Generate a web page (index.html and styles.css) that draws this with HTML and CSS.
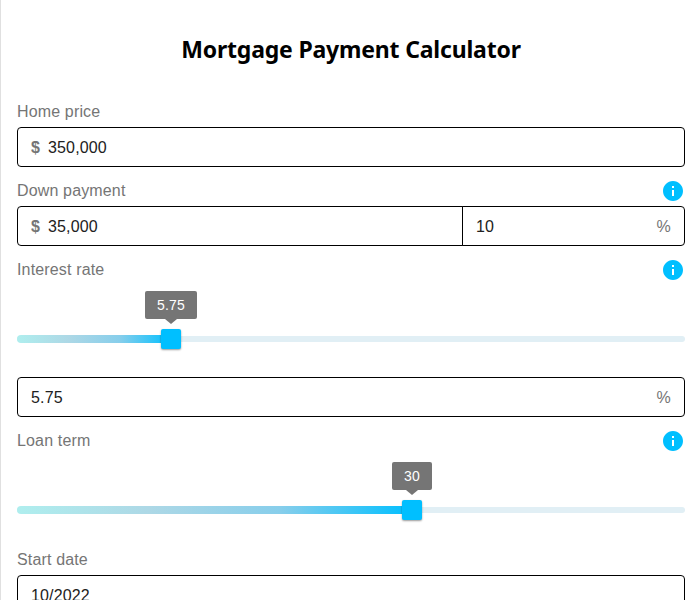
FILE: index.html
```html
<!DOCTYPE html>
<html lang="en">
<head>
<meta charset="utf-8">
<title>Mortgage Payment Calculator</title>
<link rel="stylesheet" href="styles.css">
</head>
<body>
<svg class="sprite" aria-hidden="true"><symbol id="info" viewBox="0 0 24 24"><path d="M12 2C6.48 2 2 6.48 2 12s4.48 10 10 10 10-4.48 10-10S17.520 2 12 2zm1 15h-2v-6h2v6zm0-8h-2V7h2v2z"/></symbol></svg>
<main class="calculator">
  <h1 class="title">Mortgage Payment Calculator</h1>
  <div class="label"><span>Home price</span></div>
  <div class="box"><span class="currency">$</span><span class="value">350,000</span></div>
  <div class="label"><span>Down payment</span><svg class="info"><use href="#info"/></svg></div>
  <div class="split">
    <div class="box box-amount"><span class="currency">$</span><span class="value">35,000</span></div>
    <div class="box box-percent"><span class="value">10</span><span class="percent">%</span></div>
  </div>
  <div class="label"><span>Interest rate</span><svg class="info"><use href="#info"/></svg></div>
  <div class="slider slider-rate">
    <div class="rail"><div class="track" style="width: 154px"></div><div class="thumb" style="left: 154px"><span class="tip tip-rate">5.75</span></div></div>
  </div>
  <div class="box"><span class="value">5.75</span><span class="percent">%</span></div>
  <div class="label"><span>Loan term</span><svg class="info"><use href="#info"/></svg></div>
  <div class="slider slider-term">
    <div class="rail"><div class="track" style="width: 395px"></div><div class="thumb" style="left: 395px"><span class="tip tip-term">30</span></div></div>
  </div>
  <div class="label"><span>Start date</span></div>
  <div class="box"><span class="value">10/2022</span></div>
</main>
</body>
</html>
```
FILE: styles.css
```css
* { box-sizing: border-box; }
html { overflow: hidden; }
body {
  margin: 0;
  height: 600px;
  overflow: hidden;
  background: #fff;
  font-family: "Liberation Sans", Arial, sans-serif;
  font-size: 16px;
  letter-spacing: 0.15px;
}
.sprite { display: none; }
.calculator {
  min-height: 600px;
  padding: 31px 15px 0 16px;
  border-left: 1px solid #e0e0e0;
}
.title {
  margin: 0 0 28px;
  height: 36px;
  font: bold 23px/36px "Noto Sans", "Open Sans", sans-serif;
  letter-spacing: -0.19px;
  text-align: center;
  color: #000;
}
.label {
  display: flex;
  align-items: center;
  justify-content: space-between;
  height: 32px;
  margin-top: 7px;
  padding-top: 2px;
  color: #757575;
}
.title + .label { margin-top: 0; }
.info {
  width: 24px;
  height: 24px;
  fill: #00bfff;
}
.box {
  display: flex;
  align-items: center;
  height: 40px;
  padding: 2px 13px 0;
  border: 1px solid #000;
  border-radius: 4px;
  color: #212121;
}
.currency {
  width: 17px;
  font-weight: bold;
  color: #757575;
}
.value { flex: 1; }
.percent { color: #757575; }
.split { display: flex; }
.box-amount {
  width: 446px;
  border-radius: 4px 0 0 4px;
}
.box-percent {
  flex: 1;
  margin-left: -1px;
  border-radius: 0 4px 4px 0;
}
.slider { padding-top: 51px; }
.slider-rate { height: 92px; }
.slider-term { height: 80px; }
.rail {
  position: relative;
  display: flex;
  align-items: center;
  height: 6px;
  border-radius: 3px;
  background: #e1eff5;
}
.track {
  height: 8px;
  border-radius: 4px;
  background: linear-gradient(90deg, #afeeee, #add8e6, #87ceeb, #00bfff);
}
.thumb {
  position: absolute;
  top: -7px;
  width: 20px;
  height: 20px;
  margin-left: -10px;
  border-radius: 2px;
  background: #00bfff;
  box-shadow: 0 1px 2px rgba(0, 0, 0, 0.4);
}
.tip {
  position: absolute;
  bottom: 30px;
  left: 50%;
  height: 28px;
  border-radius: 2px;
  background: #757575;
  color: #fff;
  font-size: 14px;
  line-height: 28px;
  text-align: center;
  transform: translateX(-50%);
}
.tip-rate { width: 52px; }
.tip-term { width: 40px; }
.tip::after {
  content: "";
  position: absolute;
  top: 100%;
  left: 50%;
  margin-left: -6px;
  border: 6px solid transparent;
  border-top: 5px solid #757575;
  border-bottom: 0;
}
```
